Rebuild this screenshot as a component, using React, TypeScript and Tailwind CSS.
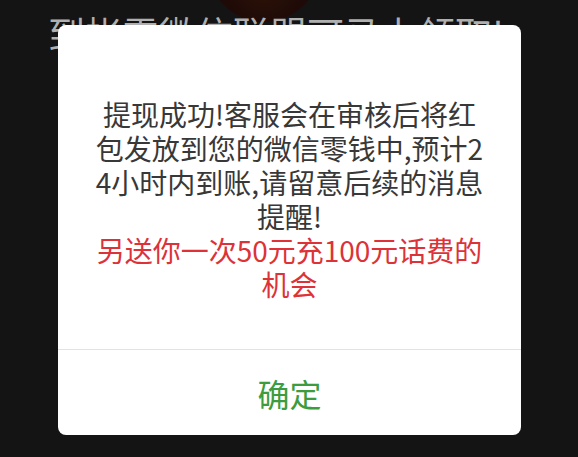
import React from "react";

export default function App() {
  const font = { fontFamily: '"Noto Sans CJK SC", "Noto Sans", sans-serif' };
  return (
    <div className="relative w-[578px] h-[457px] overflow-hidden bg-[#141414]" style={font}>
      {/* background page behind the modal */}
      <div className="absolute left-[208px] top-[-40px] w-[112px] h-[62px] rounded-b-[56px] bg-[radial-gradient(circle_at_50%_40%,#2e1408,#1f0a07_60%,#180a08)]" />
      <div className="relative pt-[15px] pl-[48px] text-[37px] leading-none text-[#b0b0b0] whitespace-nowrap">
        到帐需微信联盟可马上领取!
      </div>

      {/* modal */}
      <div className="absolute left-[58px] top-[25px] w-[463px] h-[410px] rounded-[8px] bg-white flex flex-col overflow-hidden">
        <div className="flex-1 flex flex-col items-center pt-[72px] text-[28px] leading-[34px] text-[#383838] text-center whitespace-nowrap">
          <span>提现成功!客服会在审核后将红</span>
          <span>包发放到您的微信零钱中,预计2</span>
          <span>4小时内到账,请留意后续的消息</span>
          <span>提醒!</span>
          <span className="text-[#dc3238]">另送你一次50元充100元话费的</span>
          <span className="text-[#dc3238]">机会</span>
        </div>
        <div className="h-px bg-[#e2e2e2]" />
        <div className="h-[85px] flex items-center justify-center text-[32px] text-[#3d9c3d]">
          确定
        </div>
      </div>
    </div>
  );
}
